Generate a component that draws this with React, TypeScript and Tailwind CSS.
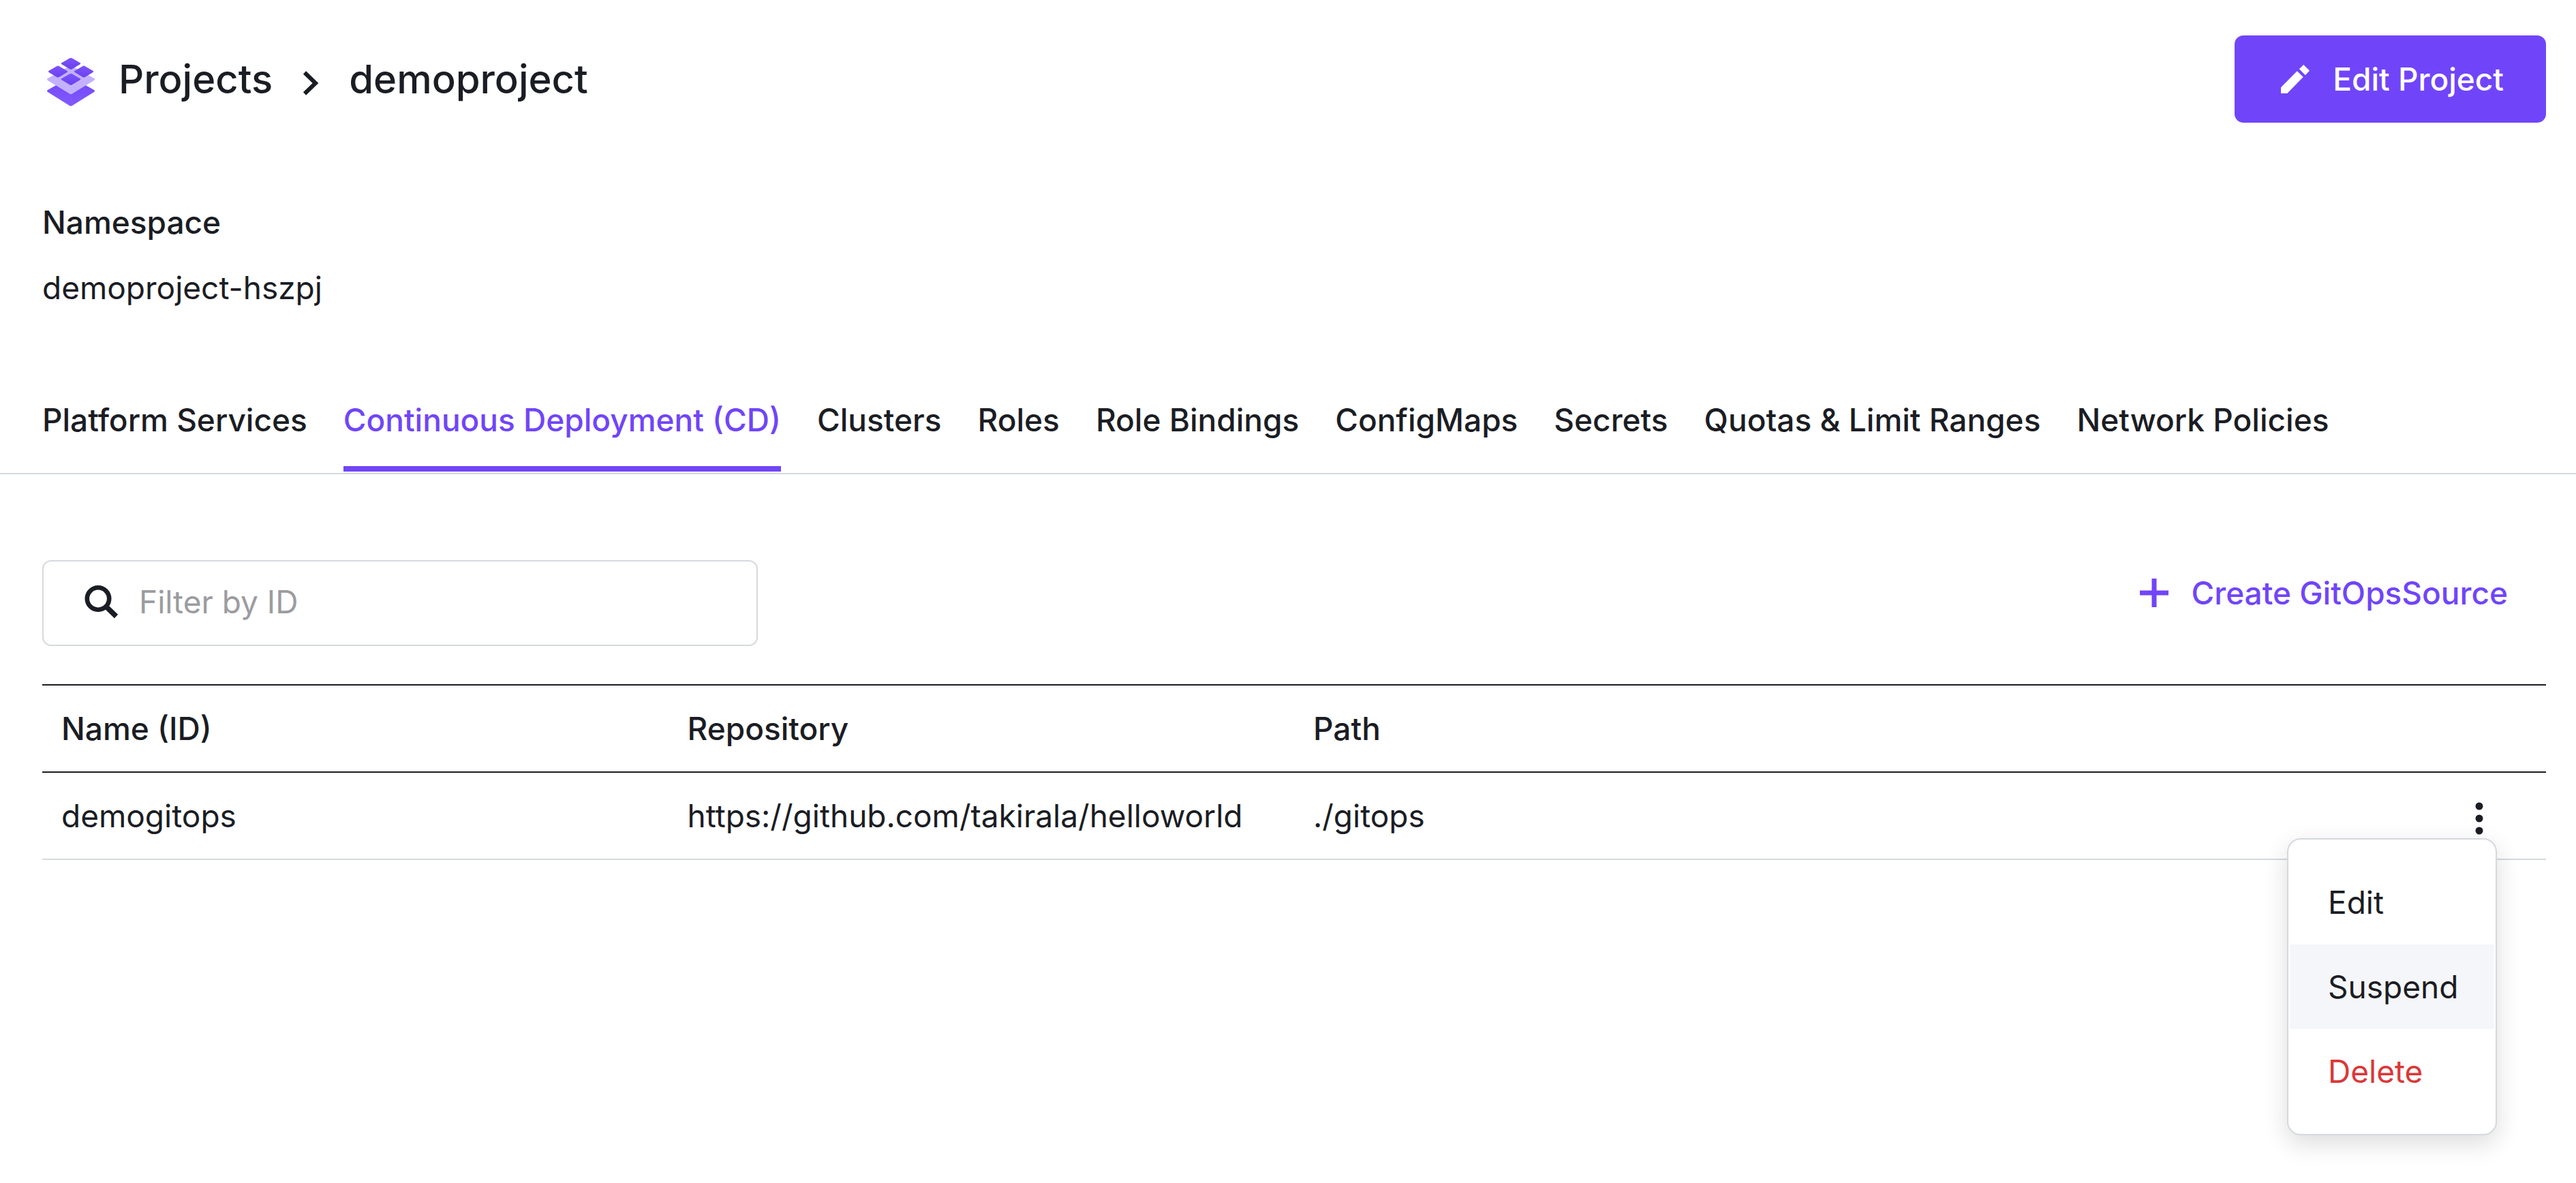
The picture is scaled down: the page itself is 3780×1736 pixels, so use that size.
import React from "react";

const TABS = [
  "Platform Services",
  "Continuous Deployment (CD)",
  "Clusters",
  "Roles",
  "Role Bindings",
  "ConfigMaps",
  "Secrets",
  "Quotas & Limit Ranges",
  "Network Policies",
];

const ACTIVE_TAB = "Continuous Deployment (CD)";

const SOURCES = [
  { id: "demogitops", repository: "https://github.com/takirala/helloworld", path: "./gitops" },
];

function ProjectsIcon() {
  return (
    <svg viewBox="0 0 72 72" className="mt-2 size-[72px] shrink-0" aria-hidden="true">
      <defs>
        <linearGradient id="layer-base" x1="0" y1="0" x2="0" y2="1">
          <stop offset="0" stopColor="#7047f5" />
          <stop offset="1" stopColor="#825aff" />
        </linearGradient>
        <linearGradient id="layer-tile" x1="0" y1="0" x2="0" y2="1">
          <stop offset="0" stopColor="#7c52ff" />
          <stop offset="1" stopColor="#6a42ec" />
        </linearGradient>
      </defs>
      <path
        d="M36 29 L70 48 Q72 49.500 70 51 L38 71 Q36 72.300 34 71 L2 51 Q0 49.500 2 48 Z"
        fill="url(#layer-base)"
      />
      <path
        d="M36 12 L70 31 Q72 32.500 70 34 L38 53.500 Q36 54.800 34 53.500 L2 34 Q0 32.500 2 31 Z"
        fill="#c3b1ff"
      />
      <g fill="url(#layer-tile)">
        <path d="M34.500 1.300 Q36 .5 37.500 1.300 L49.500 8.300 Q51 9.300 49.500 10.300 L37.500 17.500 Q36 18.300 34.500 17.500 L22.500 10.300 Q21 9.300 22.500 8.300 Z" />
        <path d="M15.500 13 Q17 12.200 18.500 13 L30.500 20 Q32 21 30.500 22 L18.500 29.200 Q17 30 15.500 29.200 L3.500 22 Q2 21 3.500 20 Z" />
        <path d="M53.500 13 Q55 12.200 56.500 13 L68.500 20 Q70 21 68.500 22 L56.500 29.200 Q55 30 53.500 29.200 L41.500 22 Q40 21 41.500 20 Z" />
        <path d="M34.500 24.300 Q36 23.500 37.500 24.300 L49.500 31.300 Q51 32.300 49.500 33.300 L37.500 40.500 Q36 41.300 34.500 40.500 L22.500 33.300 Q21 32.300 22.500 31.300 Z" />
      </g>
    </svg>
  );
}

function ChevronIcon() {
  return (
    <svg viewBox="0 0 24 36" className="h-9 w-6 shrink-0" fill="none" aria-hidden="true">
      <path d="M3 2.500 L19 18 L3 33.500" stroke="#1b1d24" strokeWidth="6" />
    </svg>
  );
}

function PencilIcon() {
  return (
    <svg viewBox="0 0 42 42" className="size-[42px] shrink-0" fill="currentColor" aria-hidden="true">
      <path d="M0 33.300 L23.800 9.300 L32.700 17.900 L9.300 42 L0 42 Z" />
      <path d="M33.200 0 L42 8.700 L35.800 15.200 L26.900 6.300 Z" />
    </svg>
  );
}

function PlusIcon() {
  return (
    <svg viewBox="0 0 42 42" className="size-[42px] shrink-0" fill="currentColor" aria-hidden="true">
      <path d="M17.500 0 H24.500 V17.500 H42 V24.500 H24.500 V42 H17.500 V24.500 H0 V17.500 H17.500 Z" />
    </svg>
  );
}

function SearchIcon() {
  return (
    <svg viewBox="0 0 50 50" className="size-[50px] shrink-0" fill="none" stroke="#1b1d24" aria-hidden="true">
      <circle cx="20" cy="20.500" r="16.200" strokeWidth="6.600" />
      <path d="M31 31.500 L46.500 46.500" strokeWidth="7.500" />
    </svg>
  );
}

function DotsIcon() {
  return (
    <svg viewBox="0 0 12 48" className="h-12 w-3" fill="#1b1d24" aria-hidden="true">
      <circle cx="6" cy="6" r="5.500" />
      <circle cx="6" cy="24" r="5.500" />
      <circle cx="6" cy="42" r="5.500" />
    </svg>
  );
}

function RowMenu() {
  return (
    <div
      role="menu"
      className="absolute top-[96px] right-[72px] z-10 flex w-[308px] flex-col rounded-[20px] border-2 border-[#d5d8de] bg-white px-0.5 py-[30px] shadow-[0_12px_36px_rgba(0,0,0,0.14)]"
    >
      <button role="menuitem" className="py-[30px] pl-14 text-left">
        Edit
      </button>
      <button role="menuitem" className="bg-[#f5f6f9] py-[30px] pl-14 text-left">
        Suspend
      </button>
      <button role="menuitem" className="py-[30px] pl-14 text-left text-[#da3838]">
        Delete
      </button>
    </div>
  );
}

export default function App() {
  return (
    <div className="min-h-screen bg-white pt-[52px] font-['Inter',sans-serif] text-[46px] leading-[64px] text-[#1b1d24]">
      <header className="flex items-center justify-between pr-11 pl-[68px]">
        <nav aria-label="Breadcrumb" className="flex items-center text-[58px] font-medium">
          <ProjectsIcon />
          <a href="#projects" className="ml-[34px]">
            Projects
          </a>
          <span className="mx-11 mt-3 flex">
            <ChevronIcon />
          </span>
          <span>demoproject</span>
        </nav>
        <button className="flex h-32 items-center gap-[34px] rounded-[13px] bg-[#7045f9] pr-[62px] pl-[68px] font-medium text-white">
          <PencilIcon />
          Edit Project
        </button>
      </header>

      <dl className="mt-[114px] flex flex-col gap-8 pl-[62px]">
        <dt className="font-medium">Namespace</dt>
        <dd>demoproject-hszpj</dd>
      </dl>

      <nav
        aria-label="Project sections"
        className="mt-[130px] flex gap-[53px] border-b-2 border-[#d5d9de] pb-0.5 pl-[62px] font-medium whitespace-nowrap"
      >
        {TABS.map((tab) => (
          <a
            key={tab}
            href="#tab"
            aria-current={tab === ACTIVE_TAB ? "page" : undefined}
            className={
              tab === ACTIVE_TAB
                ? "border-b-8 border-[#7045f9] pb-9 text-[#7045f9]"
                : "border-b-8 border-transparent pb-9"
            }
          >
            {tab}
          </a>
        ))}
      </nav>

      <main className="mt-[126px] pr-11 pl-[62px]">
        <div className="flex items-start justify-between">
          <label className="flex h-[126px] w-[1050px] items-center gap-[30px] rounded-[13px] border-2 border-[#d5d9de] px-[60px] pb-1">
            <SearchIcon />
            <input
              type="text"
              aria-label="Filter by ID"
              placeholder="Filter by ID"
              className="min-w-0 flex-1 bg-transparent outline-none placeholder:text-[#9b9ca0]"
            />
          </label>
          <button className="flex h-24 items-center gap-[34px] pr-14 font-medium text-[#7045f9]">
            <PlusIcon />
            Create GitOpsSource
          </button>
        </div>

        <table className="mt-14 w-full table-fixed border-collapse text-left">
          <thead>
            <tr className="h-32 border-y-2 border-[#1b1d24]">
              <th className="px-7 font-medium">Name (ID)</th>
              <th className="px-7 font-medium">Repository</th>
              <th className="px-7 font-medium">Path</th>
              <th aria-label="Actions" />
            </tr>
          </thead>
          <tbody>
            {SOURCES.map((source) => (
              <tr key={source.id} className="h-32 border-b-2 border-[#d5d9de]">
                <td className="px-7">{source.id}</td>
                <td className="px-7 whitespace-nowrap">{source.repository}</td>
                <td className="px-7">{source.path}</td>
                <td className="relative">
                  <button aria-label="Row actions" className="mt-2 mr-[92px] ml-auto flex">
                    <DotsIcon />
                  </button>
                  <RowMenu />
                </td>
              </tr>
            ))}
          </tbody>
        </table>
      </main>
    </div>
  );
}
